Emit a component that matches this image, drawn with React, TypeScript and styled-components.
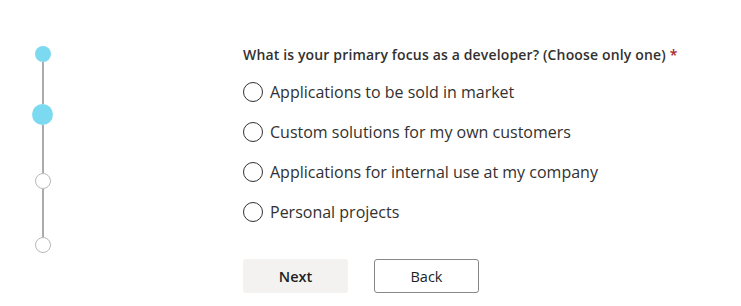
import styled, { createGlobalStyle } from 'styled-components'

const GlobalStyle = createGlobalStyle`
  html, body {
    margin: 0;
    padding: 0;
    background: #fff;
  }
  body {
    font-family: "Open Sans", "Noto Sans", sans-serif;
    color: #201f1e;
  }
`

const Page = styled.div`
  display: flex;
  width: 741px;
  height: 306px;
  box-sizing: border-box;
  padding: 46px 0 0 32px;
`

const Stepper = styled.div`
  display: flex;
  flex-direction: column;
  align-items: center;
  width: 21px;
`

const Dot = styled.div<{ $done?: boolean; $size: number }>`
  width: ${(p) => p.$size}px;
  height: ${(p) => p.$size}px;
  border-radius: 50%;
  box-sizing: border-box;
  flex-shrink: 0;
  background: ${(p) => (p.$done ? '#7cdaf0' : '#fff')};
  border: ${(p) => (p.$done ? 'none' : '1px solid #b8b8b8')};
`

const Segment = styled.div<{ $h: number }>`
  width: 2px;
  height: ${(p) => p.$h}px;
  background: #ababab;
`

const Form = styled.div`
  display: flex;
  flex-direction: column;
  margin-left: 190px;
`

const Question = styled.div`
  font-size: 14px;
  font-weight: 600;
  color: #323130;
  line-height: 18px;
  letter-spacing: 0.15px;
`

const Required = styled.span`
  color: #a4262c;
  margin-left: 4px;
`

const Options = styled.div`
  display: flex;
  flex-direction: column;
  gap: 16px;
  margin-top: 16px;
`

const Option = styled.label`
  display: flex;
  align-items: center;
  gap: 7px;
  height: 24px;
  font-size: 16px;
  color: #323130;
  letter-spacing: 0;
`

const Radio = styled.span`
  width: 20px;
  height: 20px;
  border-radius: 50%;
  border: 1px solid #323130;
  box-sizing: border-box;
  flex-shrink: 0;
`

const Buttons = styled.div`
  display: flex;
  gap: 26px;
  margin-top: 35px;
`

const Button = styled.button<{ $primary?: boolean }>`
  width: 105px;
  height: 34px;
  font-family: inherit;
  font-size: 14.5px;
  font-weight: ${(p) => (p.$primary ? 600 : 400)};
  color: #201f1e;
  background: ${(p) => (p.$primary ? '#f3f2f1' : '#fff')};
  border: ${(p) => (p.$primary ? 'none' : '1px solid #8a8886')};
  border-radius: 3px;
  padding: 0;
`

const options = [
  'Applications to be sold in market',
  'Custom solutions for my own customers',
  'Applications for internal use at my company',
  'Personal projects',
]

export default function App() {
  return (
    <>
      <GlobalStyle />
      <Page>
        <Stepper>
          <Dot $done $size={16} />
          <Segment $h={42} />
          <Dot $done $size={21} />
          <Segment $h={48} />
          <Dot $size={16} />
          <Segment $h={48} />
          <Dot $size={16} />
        </Stepper>
        <Form>
          <Question>
            What is your primary focus as a developer? (Choose only one)
            <Required>*</Required>
          </Question>
          <Options>
            {options.map((o) => (
              <Option key={o}>
                <Radio />
                {o}
              </Option>
            ))}
          </Options>
          <Buttons>
            <Button $primary>Next</Button>
            <Button>Back</Button>
          </Buttons>
        </Form>
      </Page>
    </>
  )
}
